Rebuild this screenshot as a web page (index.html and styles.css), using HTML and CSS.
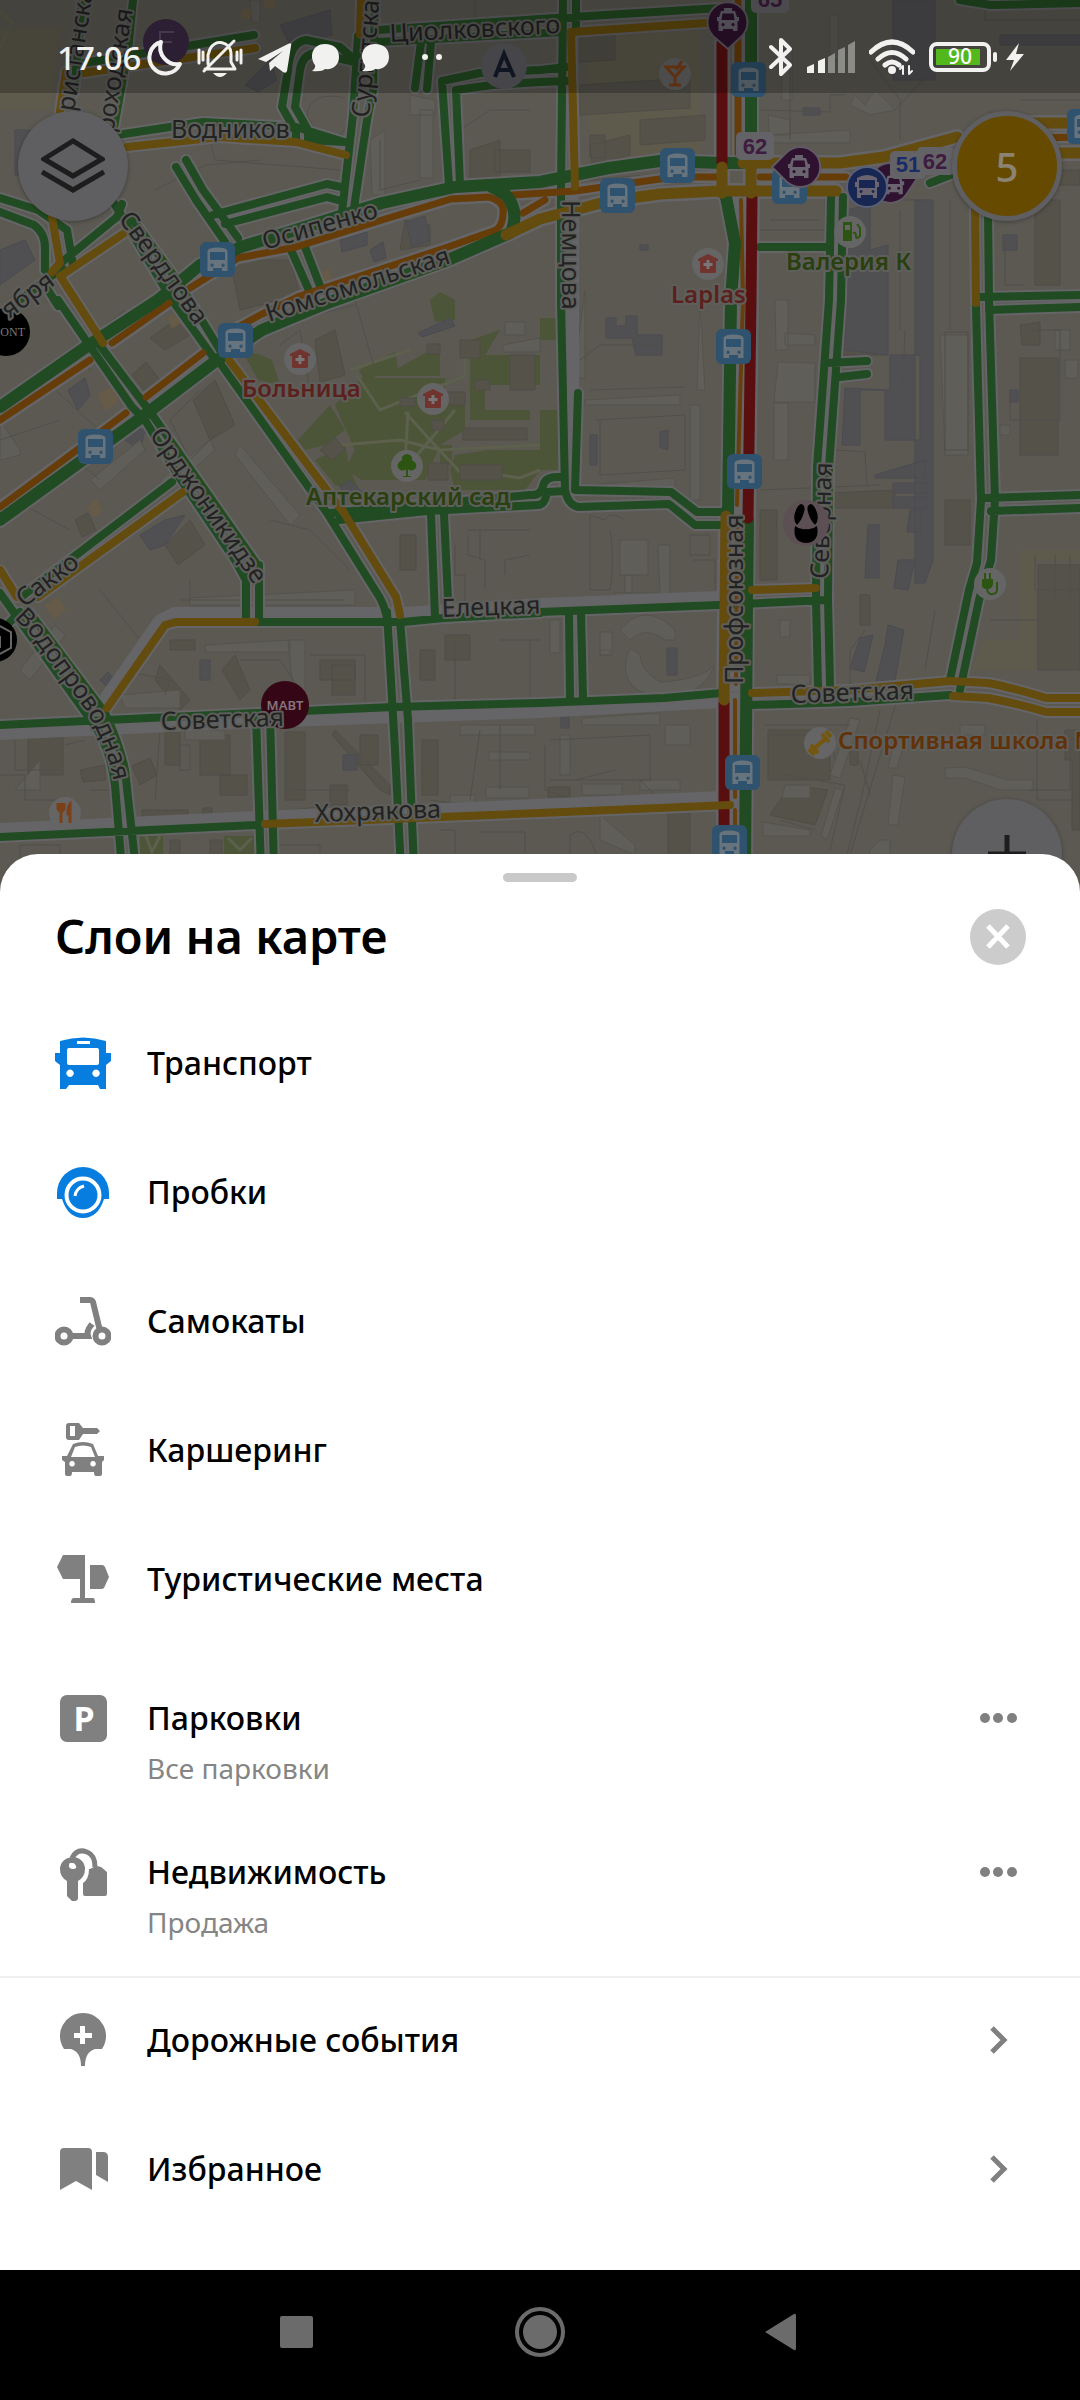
FILE: index.html
```html
<!DOCTYPE html>
<html lang="ru">
<head>
<meta charset="utf-8">
<meta name="viewport" content="width=device-width, initial-scale=1">
<title>Слои на карте</title>
<link rel="stylesheet" href="styles.css">
</head>
<body>
<div class="screen">
<section class="map-area">
<svg class="map" viewBox="0 0 1080 891" preserveAspectRatio="xMidYMin slice" role="img" aria-label="Карта города">
<defs>
<path id="g7" d="M82 0L74 93M133 0L128 50L113 133M84 63L254 35M117 135L203 122L296 127L344 142M358 36L353 115L342 212M375 0L373 90L367 120L354 208M355 60L340 47L306 40Q290 42 288 70L282 107L296 132V142M355 62L315 53Q302 55 300 70L295 107L308 130V140L344 142M378 30L540 19L720 8M378 42L562 32M421 42L415 88M431 42L427 89M567 67L540 70L480 73L442 81L449 185M567 81L540 82L492 85L456 90L460 185M563 0L561 190M576 0V28M561 190V300L565 490M578 393L575 490L671 492L697 512H722M565 490Q568 505 578 507L669 504L695 525H722M560 477Q545 476 543 486T530 495L330 513M565 491L547 492Q545 505 538 505L427 511L339 520M831 197L829 300L817 467L816 600L818 687M843 197L841 300L829 467L828 600L830 684M826 363L867 361M840 377L867 374M760 247H829M540 612L719 605L826 600M988 210L989 300L995 500L991 560L979 600L960 690M976 307L981 500L977 563L969 590L950 680M980 297L1080 295M989 310L1080 307M983 498L1080 495M991 511L1080 508M960 0L991 5L1080 3M750 705L850 702L950 695M0 725L258 713L393 707L540 703L664 698L722 693M0 837L258 825M255 622H403L444 618L540 613M246 573V622M259 565V622M431 514L435 617M444 514L448 599M569 613L570 698M581 613L583 698M256 716L261 870M270 714L274 870M387 612L395 750L401 870M400 620L408 720L414 870M220 363L327 513L375 590Q386 605 388 625M131 217L179 283L220 350M112 200L172 300L213 357M58 300L132 407L145 420L179 477L235 560L246 580M98 343L151 413L256 563Q260 570 259 580M21 597L172 482M30 613L105 713Q120 745 125 770L136 870M0 593L92 722Q110 745 115 785L122 870M0 632L20 612M176 167L196 200L225 242M186 160L203 190L238 238M213 215L327 184L341 187M225 224L327 197L341 201M291 250L312 297M305 247L322 291M0 198L38 210L67 230L73 265M0 212L34 225Q45 233 45 248V270M62 262L117 217L122 204M48 290L58 306M930 183L958 172M0 315L62 268"/>
<path id="g11" d="M0 407L86 347L158 300L200 265L241 247L382 203L455 187L540 182L609 168L660 161L722 163H742M510 233L448 260L327 303L262 330L217 360L138 420L0 520M512 230Q519 210 506 195L492 187M751 0V137M726 197L735 243L731 300L728 515M748 520L747 600L745 870"/>
<path id="y8" d="M66 72L59 118M84 73L255 48M127 147L220 137L296 142L346 155M361 0L360 35M705 23L571 32L575 187M975 210L976 303M752 590L816 588M752 693L850 690L950 681L988 683Q1010 687 1046 698H1080M953 696L988 698Q1020 704 1046 712H1080M265 824L540 813L730 805M107 708L165 625L176 622H255M229 360L344 513L396 597L400 615M62 275L126 232M52 217L60 263L52 272M60 276L103 343M38 597L183 492M0 570L17 597"/>
<path id="y11" d="M506 235L540 219L609 201L660 194L719 191H836M743 163H840L884 157L957 137M1030 123H1080M1040 153H1080M722 167V193M751 163V193M726 516L724 700"/>
<path id="o7" d="M190 288L238 258L296 247L382 220L451 199L489 197Q505 202 503 213Q503 225 496 230L448 247L300 296L262 314L238 327M513 195L575 191L674 177H716M523 213L545 200M738 0V153M760 177H846M1040 138L1080 137M112 343L169 303M0 420L90 360M146 397L203 353M126 413L77 450L0 507"/>
<path id="o4" d="M741 200L743 300L737 505M737 520L736 684M735 700V797M735 810V870"/>
<path id="r11" d="M722 43V163M752 197L751 300L748 518M724 703V855"/>
<symbol id="bus" viewBox="0 0 35 35"><rect class="stop" width="35" height="35" rx="6"/><path class="stop-glyph" fill-rule="evenodd" d="M7.500 9Q8 5.500 17.500 5.500T27.500 9V29H22V26H13V29H7.500ZM10 10V18H25V10ZM12 21.500a1.700 1.700 0 1 0 .1 0M23 21.500a1.700 1.700 0 1 0 .1 0"/></symbol>
<symbol id="cab" viewBox="0 0 26 26"><path class="pin-glyph" fill-rule="evenodd" d="M9 1H17V4H20L22 10H24V14H22.500V24H18V22H8V24H3.500V14H2V10H4L6 4H9ZM7.500 6.500L6.500 13H19.500L18.500 6.500ZM8 16a1.600 1.600 0 1 0 .1 0M18 16a1.600 1.600 0 1 0 .1 0"/></symbol>
<symbol id="med" viewBox="0 0 32 32"><circle class="poi" cx="16" cy="16" r="16"/><path class="med" d="M16 6L26 11V13H24V24Q24 25 22 25H10Q8 25 8 24V13H6V11Z"/><path class="med-cross" d="M16 12V21M11.500 16.500H20.500"/></symbol>
<path id="vodo" d="M14 618L30 634L84 708Q104 738 113 778"/>
</defs>
<rect class="ground" width="1080" height="891"/>
<path class="sand" d="M0 30L60 28L50 110H0ZM585 35L700 30V160L590 168ZM1020 550H1080V560H1035V670H970L985 640H1020Z"/>
<path class="park" d="M359 370L395 352L398 368L440 345V376H375L372 395ZM335 405L362 378H445V395H465V430L440 445L425 480H362L345 470L355 450ZM330 405L345 430L325 445L305 450L298 440ZM440 445H452V465H440ZM315 460L345 445L350 470L360 492L335 485ZM243 352L258 354L272 360L280 385L258 380ZM470 340L500 330L485 355H540V385H485V410H530V420H470ZM455 455L490 450H540V470L525 490H455L450 470ZM140 836H163V860H140ZM224 836H254V855H224ZM540 318H558V340H540ZM540 410H558V470H540ZM430 300L440 292L455 300V320L435 322Z"/>
<path class="paths" d="M356 374L380 410L465 376V345M330 446L400 440L440 450L540 445M408 412L405 465M430 440L405 412M430 440L455 410M430 440L460 472M430 440L400 475M350 370L410 350M540 470L520 478L500 475M146 836L152 852L160 836M228 838L240 850L252 838M0 12L12 22L0 48"/>
<path class="blocks" d="M470 150L500 140V195L470 200ZM495 150H530V172H495ZM405 220L430 225V245L400 250ZM175 320L190 335L165 350L150 338ZM132 375L146 362L160 380L146 393ZM315 340L335 330L345 375L320 382ZM400 398H415V406H400ZM440 392H465V405H440ZM463 428H527V440H463ZM460 465H502V480H460ZM428 463H448V480H428ZM510 355H535V390H510ZM475 380H490V390H475ZM460 340H480V358H460ZM427 344H440V354H427ZM432 420H444V430H432ZM320 450L335 437L345 450L332 460ZM165 545L190 520L205 545L178 565ZM75 520L88 513L96 530L82 537ZM193 400L215 380L235 425L210 440ZM400 535H416V570H400ZM445 635H470V660H445ZM320 660H355V680H320ZM332 665H355V695H332ZM160 665L190 700L180 710L155 680ZM235 655L250 690L240 700L222 670ZM28 737H63V775H28ZM285 732H305V800H285ZM420 650H435V680H420ZM80 770L105 765V780L83 782ZM132 766L150 758L157 775L140 785ZM165 732H180V765H165ZM200 735H230V775H200ZM220 775H247V795H220ZM330 785H347V805H330ZM335 730L390 785V795L380 790L332 735ZM360 735H378V765H360ZM422 740H438V795H422ZM142 810H188V823H142ZM203 808H212V820H203ZM170 840H180V860H170ZM210 840H222V860H210ZM580 30L615 35V60L580 62ZM580 85L690 78V108L580 115ZM640 120L705 115V140L640 145ZM590 145L630 135V155L592 165ZM590 135H605V158H590ZM760 510H777V580H760ZM830 493L895 490V508H830ZM1020 325L1040 322V345H1022ZM1020 358H1058V455H1020ZM945 500H970V545H945ZM1038 565H1080V670H1038ZM1035 170H1080V185H1035ZM1035 200H1060V285H1035ZM838 320H885V355H838ZM860 595H870V625H860ZM548 787H570V797H548ZM668 812H690V855H668ZM768 730H830V780H768ZM850 740H858V765H850ZM790 785L828 790L815 825L770 815ZM1075 730H1080V830H1072V760H1065V730ZM230 260L290 260L300 295L240 310ZM170 640H195V650H170ZM215 350L222 345L230 360L222 365Z"/>
<path class="cool" d="M280 25L330 10L332 35L290 45ZM245 85L270 60L277 80L258 92ZM15 130H30V175H15ZM0 250L25 240L35 260L0 285ZM340 240L367 232V245L342 252ZM406 222L425 216L430 240L412 247ZM370 250L383 242L386 258L374 262ZM68 390L85 378L90 395L78 410ZM125 425L145 430L140 450L122 438ZM140 535L165 520L185 515L165 545L150 550ZM418 333L450 318L455 326L422 337ZM606 318H616V326H626V316H637V335H662V355H636L632 338H606ZM660 432L668 430V450L660 447ZM845 210L870 205V250L888 245V355L845 350ZM845 388L885 390V440H920V355H890V390H860V445H842ZM915 200H933V560L925 583H915ZM875 475L925 460V478H875ZM893 483H926V493H893ZM893 497H926V508H893ZM868 525H879V578H865ZM898 560H915L908 590L894 588ZM910 510H921V532H907ZM893 0H935V80H893ZM1000 35H1080V45H1000ZM1003 235H1017V250H1003ZM860 638L873 635L864 672L850 668ZM888 625L904 630L895 680L875 685L885 645ZM667 648H677V675H667ZM561 715H569V728H561ZM200 660H210V680H200ZM343 755H357V770H343ZM100 680L108 672L115 680L108 688ZM590 435H597V465H590ZM1010 390H1018V402H1010ZM803 108H820V115H803ZM640 245H648V250H640ZM340 487L350 480L365 495H345Z"/>
<path class="light" d="M250 0H260V22H252ZM782 50L792 48V100H782ZM768 115L790 120V135H768L850 130V143H770ZM830 15H838V60H830ZM875 90L895 110L870 115L850 105L855 95L865 105ZM410 95L435 100V115H410ZM420 110H433V178H420ZM370 140L385 130V195H372ZM240 445L300 515L290 525L235 455ZM160 480L210 440L215 450L170 490ZM0 420L20 450V455L0 460ZM90 480L140 440L145 450L100 490ZM585 400L680 395V405H585ZM575 365L585 290V378H575ZM700 300L705 390H697ZM690 405H700V500H690ZM590 485L675 478V488H590ZM778 362L815 363V402H774ZM775 300H788V350H776ZM785 333L815 335V345H785ZM774 403H788V460H774ZM940 335H968V455H945ZM1055 330H1070V350H1055ZM1065 360H1078V378H1065ZM1000 425H1010V435H1000ZM620 540H648V575H620ZM658 545H670V605H615V593H660ZM625 575H632V593H625ZM205 645L290 640V652H205ZM288 640H305V710H295ZM120 695L180 690V708H125ZM190 598L355 590V605H190ZM20 670L55 625L65 635L30 680ZM15 790L40 760V790ZM185 730H225V740H185ZM460 725H535V735H460ZM489 752H530V760H489ZM486 787H529V798H486ZM450 795H475V803H450ZM600 815L635 845V855L600 840ZM582 718L660 713V725H582ZM560 735H570V775H560ZM665 725H690V745H665ZM582 784H622V795H582ZM640 780H680V790H640ZM600 650H610V655H600ZM550 620H560V653H550ZM600 632H612V655H600ZM620 630Q645 600 675 630V640H665Q645 625 630 640ZM630 648Q615 685 650 695H680Q705 690 715 665Q700 680 660 682Q640 670 640 655ZM850 718L860 720L840 778L830 775ZM895 735L905 740L897 768H888ZM893 775L905 777L898 825H888ZM835 788L843 790L827 840L821 836ZM785 785H810V798H782ZM763 822L810 830V836H763ZM945 768L965 767L1008 780H1033V790H1000L965 778H945ZM870 850L880 840H890V870H870ZM960 725H985V735H960ZM780 620H790V637H780ZM777 675H810V684H777ZM503 345L540 338V352H503ZM505 322H525V335H505Z"/>
<path class="lines" d="M345 98Q310 90 307 115L315 130Q330 145 345 130M155 190L205 165L260 160M128 220L140 250L170 300M210 140L215 160L340 170M380 140V190L420 180M460 130L490 110H530M475 0V20H510M590 180L700 170M760 110L830 112V95H845M770 45L790 60V140M870 60L900 100V140M895 110L960 40M985 0V20H1080M1020 100H1080M990 110L1000 150M765 190L825 195V230H760M770 220H820M900 210V330M880 200H920M950 200V330M1005 240V285H1025M1060 210V280M590 390L685 387M595 420L685 415V470L600 475V420M580 360L600 345H660M905 330L902 405M835 450L865 452L867 487M760 490L880 485M945 332H968V450H945ZM1010 400V420H1060V330H1030M625 520Q610 510 605 520L590 515V590H610Q615 560 610 530M690 535H710V555H690ZM693 560H715V590M170 420L200 390L230 420L190 460ZM190 580V600M180 600H345M270 520L310 530L350 570M55 390L110 440M0 440L60 420M15 500L70 530M100 590L140 640M120 670L170 680L165 695M240 660H280L300 690V715M310 655H365V705H320M455 640V700M500 640H540M530 640V700M480 730L470 800M500 790V725M15 740V770H60M65 745L85 740M160 730L155 800M180 745H190V770H180ZM0 775H25V800H65M90 790H125M290 790H350M430 800L500 810M545 745V790L575 800M550 740L650 735V780H550M575 780L615 770M640 780L660 800M765 725H850M770 735H830L835 760M785 775L845 785L830 850M860 760L870 795M880 710L862 795L847 855M1030 790H1070V745M1037 720V800H1075M900 690L850 855M935 610L925 670M850 685V650L865 630M570 870V835Q590 820 600 870M20 860V845H60V870M440 830H455V870M480 832H525V870M270 845H320V860M290 810L340 805M65 450L100 480M80 350L90 370M100 330L125 310M780 820L815 830M990 620H1038M1035 555V590H1080M1055 555V600M1070 555V600M465 610V575H455V545M468 535V555L485 560V590M480 530V560M468 530H530M505 575V560L530 555M280 345L300 330L310 390L330 395M295 320L355 305M355 300L375 370"/>
<path class="warm" d="M162 22L172 20V30L162 33ZM242 10H250V18H242ZM265 0H274V8H265ZM70 450L85 438L92 450L78 462ZM88 508L96 500L102 510L94 517ZM168 318L178 312L182 322L172 328ZM98 395L115 385L118 402L105 410ZM320 275L328 268L332 280L324 285ZM45 605L58 598L65 610L55 618Z"/>
<g class="casing"><use href="#g7" class="w8"/><use href="#g11" class="w12"/><use href="#y8" class="w8"/><use href="#y11" class="w12"/><use href="#o7" class="w8"/><use href="#o4" class="w12"/><use href="#r11" class="w12"/><path class="w8" d="M0 734L258 722L540 712L722 702M0 829L258 817L722 797M102 703L160 620L174 613H403L540 604L719 597M262 615H400M573 200V485"/></g>
<g class="road"><use href="#g7" class="g7"/><use href="#o7" class="o7"/><use href="#o4" class="o4"/><use href="#g11" class="g11"/><use href="#r11" class="r11"/><use href="#y8" class="y8"/><use href="#y11" class="y11"/></g>
<g><circle class="brand-violet" cx="166" cy="42" r="23"/><path class="brand-line" d="M174 32H160V52M160 42H172"/>
<circle class="brand-light" cx="504" cy="66" r="23"/><path class="brand-a" d="M495 77L504 54L514 77M498 70H511"/>
<circle class="black" cx="6" cy="332" r="24"/><text class="brand-serif" x="25" y="336" text-anchor="end">ONT</text>
<circle class="black" cx="-5" cy="640" r="22"/><path class="brand-hex" d="M-4 624L11 632V648L-4 656M0 636V648"/>
<circle class="mavt" cx="285" cy="705" r="24"/><text class="brand-sans" x="285" y="710" text-anchor="middle">МАВТ</text></g>
<g class="street">
<text transform="translate(74 112) rotate(-81)">ристанская</text>
<text transform="translate(111 147) rotate(-81)">ароходская</text>
<text x="171" y="138">Водников</text>
<text transform="translate(369 118) rotate(-85)">Сургутская</text>
<text transform="translate(390 42) rotate(-3)">Циолковского</text>
<text transform="translate(265 250) rotate(-16)">Осипенко</text>
<text transform="translate(269 322) rotate(-18)">Комсомольская</text>
<text transform="translate(118 219) rotate(54)">Свердлова</text>
<text transform="translate(56 284) rotate(-37)" text-anchor="end">ября</text>
<text transform="translate(149 435) rotate(55)">Орджоникидзе</text>
<text transform="translate(24 608) rotate(-37)">Сакко</text>
<text><textPath href="#vodo">Водопроводная</textPath></text>
<text transform="translate(161 730) rotate(-2)">Советская</text>
<text transform="translate(315 822) rotate(-2)">Хохрякова</text>
<text transform="translate(442 617) rotate(-2)">Елецкая</text>
<text transform="translate(562 200) rotate(90)">Немцова</text>
<text transform="translate(743 684) rotate(-90)">Профсоюзная</text>
<text transform="translate(828 579) rotate(-88)">Северная</text>
<text transform="translate(791 703) rotate(-2)">Советская</text>
</g>
<g class="place">
<text class="t-red" x="671" y="303">Laplas</text><text class="t-green" x="786" y="270">Валерия К</text><text class="t-red" x="242" y="397">Больница</text><text class="t-green" x="306" y="505">Аптекарский сад</text><text class="t-orange" x="838" y="749">Спортивная школа №</text>
</g>
<g>
<use href="#med" x="692" y="248" width="32" height="32"/><use href="#med" x="284" y="343" width="32" height="32"/><use href="#med" x="417" y="383" width="32" height="32"/>
<circle class="poi" cx="675" cy="74" r="16"/><path class="ln-orange" d="M666 67H684L675 77ZM675 77V84M669 85H681M676 70L682 61"/>
<circle class="poi" cx="850" cy="232" r="16"/><path class="fl-green" fill-rule="evenodd" d="M843 222H852V241H843ZM845 225V230H850V225Z"/><path class="ln-green" d="M853 233Q856 232 856 236T860 236V228L857 224"/>
<circle class="poi" cx="407" cy="466" r="16"/><path class="fl-green" d="M407 454Q413 455 412 460Q419 464 415 469Q411 472 408 469V476H411V477H403V476H406V469Q403 472 399 469Q395 464 402 460Q401 455 407 454Z"/>
<circle class="poi" cx="990" cy="584" r="16"/><path class="fl-green" d="M982 579H993V583Q993 589 987 589T982 583Z"/><path class="ln-green" d="M985 573V579M990 573V579M987 589Q988 595 993 594T997 588V582"/>
<circle class="poi" cx="820" cy="743" r="16"/><path class="ln-yellow" d="M811 745L818 753M822 734L829 742M815 748L826 738M809 749L814 755M826 731L831 737"/>
<circle class="poi" cx="65" cy="813" r="16"/><path class="ln-orange" d="M58 803V809Q61 813 64 809V803M61 803V823M70 823V804Q68 806 68 814H70"/>
<circle class="rose" cx="806" cy="523" r="23"/><path class="black" d="M801 504Q806 505 804 512Q802 520 797 525Q792 519 796 510Q798 505 801 504ZM811 504Q806 505 808 512Q810 520 815 525Q820 519 816 510Q814 505 811 504ZM795 526Q800 530 806 529Q812 530 817 526Q820 542 806 543Q792 542 795 526Z"/>
</g>
<g><use href="#bus" x="200" y="242" width="35" height="35"/><use href="#bus" x="731" y="62" width="35" height="35"/><use href="#bus" x="660" y="148" width="35" height="35"/><use href="#bus" x="600" y="178" width="35" height="35"/><use href="#bus" x="772" y="169" width="35" height="35"/><use href="#bus" x="1067" y="109" width="35" height="35"/><use href="#bus" x="218" y="323" width="35" height="35"/><use href="#bus" x="78" y="429" width="35" height="35"/><use href="#bus" x="716" y="329" width="35" height="35"/><use href="#bus" x="727" y="454" width="35" height="35"/><use href="#bus" x="725" y="755" width="35" height="35"/><use href="#bus" x="712" y="825" width="35" height="35"/></g>
<g>
<path class="pin" d="M728 49L713 36A20 20 0 1 1 742 36Z"/><use href="#cab" x="715" y="7" width="26" height="26"/>
<path class="pin" d="M772 167L787 152A20 20 0 1 1 787 182Z"/><use href="#cab" x="786" y="154" width="26" height="26"/>
<path class="pin" d="M918 177L908 192A20 20 0 1 1 892 163L900 164Z"/><use href="#cab" x="882" y="172" width="24" height="24"/>
<circle class="pin-blue" cx="867" cy="187" r="20"/><path class="pin-glyph" fill-rule="evenodd" d="M857 178Q867 172 877 178V182H879V187H877V198H873V195H861V198H857V187H855V182H857ZM859 180V188H875V180ZM861 190a1.500 1.500 0 1 0 .1 0M873 190a1.500 1.500 0 1 0 .1 0"/>
<rect class="tag" x="751" y="-16" width="38" height="29" rx="5"/><rect class="tag" x="736" y="132" width="38" height="28" rx="5"/><rect class="tag" x="917" y="147" width="38" height="28" rx="5"/><rect class="tag" x="890" y="151" width="36" height="28" rx="5"/>
<g class="route"><text x="770" y="7">65</text><text x="755" y="154">62</text><text x="935" y="169">62</text><text class="route-blue" x="908" y="172">51</text></g>
</g>
</svg>
<button class="round layers" aria-label="Слои"><svg viewBox="0 0 64 56" width="64" height="56"><path d="M3 21L32 3L61 21L32 38ZM1 34L32 52L63 34"/></svg></button>
<button class="round traffic" aria-label="Пробки: 5 баллов">5</button>
<button class="round plus" aria-label="Приблизить"><svg viewBox="0 0 40 40" width="40" height="40"><path d="M20 1V39M1 20H39"/></svg></button>
<header class="status">
<div class="status-left"><time>17:06</time>
<svg class="slot" viewBox="0 0 50 44"><path class="st" d="M21 7A16 16 0 1 0 40 29A17 17 0 0 1 21 7Z"/></svg>
<svg class="slot wide" viewBox="0 0 60 44"><path class="st3" d="M15 34H45L41 27V18A11 11 0 0 0 20 14L18 20V29M14 36L44 6M9 15V28M13 17V25M51 15V28M47 17V25"/><path class="fw" d="M23 38H37Q30 46 23 38Z"/></svg>
<svg class="slot" viewBox="0 0 50 44"><path class="fw" d="M8 24L38 9Q42 7 41 11L37 36Q36 39 33 37L25 31L20 36L19 28L33 16L16 27Z"/></svg>
<svg class="slot" viewBox="0 0 50 44"><path class="fw" d="M25 9C34 9 39 14 39 22S33 35 25 34Q22 37 12 36Q16 33 15 30C9 22 12 9 25 9Z"/></svg>
<svg class="slot" viewBox="0 0 50 44"><path class="fw" d="M25 9C34 9 39 14 39 22S33 35 25 34Q22 37 12 36Q16 33 15 30C9 22 12 9 25 9Z"/></svg>
<svg class="slot last" viewBox="0 0 64 44"><circle class="fw" cx="25" cy="22" r="3"/><circle class="fw" cx="39" cy="22" r="3"/></svg></div>
<div class="status-right">
<svg viewBox="0 0 24 40" width="24" height="40"><path class="st" d="M2 10L21 28L12 37V3L21 12L2 30"/></svg>
<svg viewBox="0 0 48 40" width="48" height="40"><path class="fw" d="M0 36V30L7 27V36ZM11 36V24L18 21V36Z"/><path class="dimbar" d="M21 36V20L28 16V36ZM31 36V13L38 10V36ZM41 36V8L48 4V36Z"/></svg>
<svg viewBox="0 0 46 40" width="46" height="40"><path class="st5" d="M2 15Q23 -5 44 15M9 22Q23 9 37 22M16 28Q23 22 30 28"/><circle class="fw" cx="23" cy="33" r="4"/><path class="st2" d="M34 37V29L31 32M40 29V37L43 34"/></svg>
<svg viewBox="0 0 96 40" width="96" height="40"><rect class="st" x="2" y="7" width="58" height="26" rx="6"/><rect class="charge" x="7" y="12" width="44" height="16"/><path class="st" d="M66 17V23"/><path class="fw" d="M90 6L77 23H85L81 34L95 17H87Z"/><text class="pct" x="31" y="27" text-anchor="middle">90</text></svg>
</div>
</header>
</section>
<main class="sheet">
<div class="grabber"></div>
<div class="head"><h1>Слои на карте</h1><button class="close" aria-label="Закрыть"><svg viewBox="0 0 56 56" width="56" height="56"><circle cx="28" cy="28" r="28"/><path d="M18 17L38 38M38 17L18 38"/></svg></button></div>
<ul class="list">
<li><button class="row on"><svg class="icon" viewBox="0 0 56 56"><path fill-rule="evenodd" d="M5 6Q28-1 51 6V18H56V26L51 30V54H45L43 50H14L11 54H5V30L0 26V18H5ZM22 6V9H35V6ZM12 15V28Q12 30 14 30H42Q44 30 44 28V15Q44 13 42 13H14Q12 13 12 15ZM15 34.500a3.700 3.700 0 1 0 .1 0M41 34.500a3.700 3.700 0 1 0 .1 0"/></svg>Транспорт</button></li>
<li><button class="row on"><svg class="icon" viewBox="0 0 56 56"><path d="M28 3A26 26 0 0 1 54 29V35H49Q43 54 28 54T7 35H2V29A26 26 0 0 1 28 3Z"/><circle class="ring" cx="28" cy="31" r="16.500"/><path class="ring thin" d="M20 32Q21 24 29 22"/></svg>Пробки</button></li>
<li><button class="row"><svg class="icon" viewBox="0 0 56 56"><path class="ol" d="M25 7H35Q37 7 38 9L45 38M16 43H33C31 37 35 34 37 31"/><circle class="ol" cx="9" cy="43" r="6.500"/><circle class="ol" cx="47" cy="43" r="6.500"/></svg>Самокаты</button></li>
<li><button class="row"><svg class="icon" viewBox="0 0 56 56"><path fill-rule="evenodd" d="M14 1H24L28 6H42L45 9L42 12H28L24 18H14Q11 18 11 15V4Q11 1 14 1ZM15 4V14H20V4ZM18 22Q28 18 38 22L43 34H49V38L47 40V52Q47 54 45 54H41Q39 54 39 50H17Q17 54 15 54H12Q10 54 10 52V40L7 38V34H12ZM20 25L16 35H40L36 25Q28 22 20 25ZM17 39a2.800 2.800 0 1 0 .1 0M38 39a2.800 2.800 0 1 0 .1 0"/></svg>Каршеринг</button></li>
<li><button class="row"><svg class="icon" viewBox="0 0 56 56"><path d="M8 4H30V47H38Q40 47 40 52H16Q16 47 19 47H25V28H8L2 16ZM35 14H47Q49 14 50 16L54 26L49 37Q48 38 46 38H35Z"/></svg>Туристические места</button></li>
<li class="double"><button class="row"><svg class="icon" viewBox="0 0 56 56"><rect x="5" y="2" width="47" height="47" rx="7"/><text class="p" x="29" y="38" text-anchor="middle">P</text></svg><span class="names"><span>Парковки</span><small>Все парковки</small></span></button><button class="more" aria-label="Настроить парковки"><svg viewBox="0 0 56 50" width="56" height="50"><circle cx="15" cy="25" r="5"/><circle cx="28" cy="25" r="5"/><circle cx="42" cy="25" r="5"/></svg></button></li>
<li class="double"><button class="row"><svg class="icon" viewBox="0 0 56 56"><path fill-rule="evenodd" d="M18 10A12 12 0 0 1 30 22Q30 30 23 34V52L21 54H17L12 49V34Q5 30 5 22A13 12 0 0 1 18 10ZM15 16Q14 16 14 19T18 22T21 19T18 16Z"/><path class="ol shackle" d="M17 11Q22 1 32 5Q40 8 40 20"/><path d="M35 22Q41 18 46 20L52 25V47Q52 49 50 49H30Q28 49 28 47V36Q34 32 34 22Z"/></svg><span class="names"><span>Недвижимость</span><small>Продажа</small></span></button><button class="more" aria-label="Настроить недвижимость"><svg viewBox="0 0 56 50" width="56" height="50"><circle cx="15" cy="25" r="5"/><circle cx="28" cy="25" r="5"/><circle cx="42" cy="25" r="5"/></svg></button></li>
</ul>
<ul class="list links">
<li><a class="row" href="#events"><svg class="icon" viewBox="0 0 56 56"><path fill-rule="evenodd" d="M28 1A23 23 0 0 1 47 37H40Q30 40 30 54H26Q26 40 16 37H9A23 23 0 0 1 28 1ZM25 14V21H19V26H25V32H30V26H37V21H30V14Z"/></svg><span class="grow">Дорожные события</span><svg class="chev" viewBox="0 0 56 56"><path d="M22 16L34 28L22 40"/></svg></a></li>
<li><a class="row" href="#favorites"><svg class="icon" viewBox="0 0 56 56"><path d="M5 11Q5 7 9 7H33Q37 7 37 11V49L21 40L5 49ZM41 11H48Q53 11 53 16V41L41 34Z"/></svg><span class="grow">Избранное</span><svg class="chev" viewBox="0 0 56 56"><path d="M22 16L34 28L22 40"/></svg></a></li>
</ul>
</main>
<nav class="nav">
<button aria-label="Недавние"><svg viewBox="0 0 60 60"><rect x="13" y="14" width="33" height="32" rx="2"/></svg></button>
<button aria-label="Домой"><svg viewBox="0 0 60 60"><circle cx="30" cy="30" r="17"/><circle class="outer" cx="30" cy="30" r="23"/></svg></button>
<button aria-label="Назад"><svg viewBox="0 0 60 60"><path d="M12 30L41 12Q43 11 43 14V46Q43 49 41 48Z"/></svg></button>
</nav>
</div>
</body>
</html>
```
FILE: styles.css
```css
* { box-sizing: border-box; }
body { margin: 0; background: #000; font-family: "Noto Sans", "Open Sans", sans-serif; }
button { border: 0; padding: 0; margin: 0; background: none; font: inherit; color: inherit; text-align: left; }
svg { display: block; flex: none; }
.screen { display: flex; flex-direction: column; min-height: 100vh; }

/* map */
.map-area { position: relative; height: 891px; margin-bottom: -37px; overflow: hidden; }
.map { width: 100%; height: 100%; }
.ground { fill: #5b5952; }
.sand { fill: #5e5a4c; }
.park { fill: #4d5538; }
.paths { fill: none; stroke: #5c604c; stroke-width: 3px; }
.blocks { fill: #55524a; stroke: #4f4d46; }
.cool { fill: #505053; stroke: #4a4b52; }
.light { fill: #605e58; stroke: #55534c; }
.lines { fill: none; stroke: #504f4a; }
.warm { fill: #665a48; stroke: #6b5b40; }
.casing, .road { fill: none; stroke-linejoin: round; stroke-linecap: round; }
.casing { stroke: #656568; }
.w8 { stroke-width: 12px; }
.w12 { stroke-width: 16px; }
.g7 { stroke: #214b22; stroke-width: 8px; }
.g11 { stroke: #214b22; stroke-width: 12px; }
.y8 { stroke: #644c0e; stroke-width: 8px; }
.y11 { stroke: #644c0e; stroke-width: 11px; }
.o7 { stroke: #663c08; stroke-width: 7px; }
.o4 { stroke: #663f0c; stroke-width: 4px; }
.r11 { stroke: #590f10; stroke-width: 11px; }
.street { font-size: 25px; fill: #222; stroke: #5e5e5b; stroke-width: 4px; paint-order: stroke; stroke-linejoin: round; }
.place { font-size: 24px; font-weight: 600; stroke: #5e5e5b; stroke-width: 4px; paint-order: stroke; stroke-linejoin: round; }
.t-red { fill: #5c211d; }
.t-green { fill: #2a4010; }
.t-orange { fill: #613208; }
.stop { fill: #2f526e; }
.stop-glyph { fill: #68747d; }
.pin { fill: #2f122f; stroke: #625a63; stroke-width: 2px; }
.pin-blue { fill: #172652; stroke: #586078; stroke-width: 2px; }
.pin-glyph { fill: #6a6470; }
.tag { fill: #636266; }
.route { font: 700 22px "Liberation Sans", sans-serif; fill: #3e1c40; text-anchor: middle; }
.route-blue { fill: #1a2c66; }
.poi { fill: #656565; }
.med { fill: #71332d; }
.med-cross { stroke: #777; stroke-width: 3px; }
.fl-green { fill: #2b5510; }
.ln-green { fill: none; stroke: #2b5510; stroke-width: 2px; }
.ln-orange { fill: none; stroke: #7c4018; stroke-width: 3px; }
.ln-yellow { fill: none; stroke: #74560d; stroke-width: 4px; }
.rose { fill: #5c5054; }
.black { fill: #000; }
.mavt { fill: #350716; }
.brand-violet { fill: #3b2a43; }
.brand-light { fill: #5b5b62; }
.brand-line { fill: none; stroke: #5f4a66; stroke-width: 2px; }
.brand-a { fill: none; stroke: #151c2c; stroke-width: 4px; }
.brand-hex { fill: none; stroke: #666; stroke-width: 2px; }
.brand-serif { font: 12px "Liberation Serif", serif; fill: #777; }
.brand-sans { font-size: 13px; font-weight: 600; fill: #86757c; }

/* map controls */
.round { position: absolute; width: 110px; height: 110px; border-radius: 50%; display: flex; align-items: center; justify-content: center; background: #5f5f62; box-shadow: 0 1px 4px rgba(0, 0, 0, .3); }
.round svg { fill: none; stroke: #1d1d1d; stroke-width: 5px; }
.layers { left: 18px; top: 111px; }
.traffic { right: 18px; top: 111px; border: 5px solid #5f5f62; background: #664a00; color: #8b8373; font-size: 40px; font-weight: 500; }
.plus { right: 18px; top: 799px; }

/* status bar */
.status { position: absolute; inset: 0 0 auto; height: 93px; padding: 22px 55px 0 57px; display: flex; justify-content: space-between; align-items: flex-start; background: rgba(0, 0, 0, .24); color: #f1f1f0; }
.status-left { display: flex; align-items: center; height: 70px; }
.status-left time { width: 83px; font-size: 33px; font-weight: 500; }
.status-right { display: flex; align-items: center; gap: 14px; height: 70px; }
.slot { width: 50px; height: 44px; }
.wide { width: 60px; }
.last { width: 64px; }
.fw { fill: #f1f1f0; }
.st, .st2, .st3, .st5 { fill: none; stroke: #f1f1f0; stroke-width: 4px; stroke-linejoin: round; stroke-linecap: round; }
.st2 { stroke-width: 2px; }
.st3 { stroke-width: 3px; }
.st5 { stroke-width: 5px; }
.dimbar { fill: #8b8b87; }
.charge { fill: #53b81b; }
.pct { font-size: 21px; font-weight: 500; fill: #fff; }

/* bottom sheet */
.sheet { position: relative; flex: 1; background: #fff; border-radius: 38px 38px 0 0; padding-top: 19px; color: #000; }
.grabber { width: 74px; height: 9px; border-radius: 5px; background: #c9c9c9; margin: 0 auto; }
.head { height: 110px; margin: 0 54px 7px 55px; display: flex; align-items: center; justify-content: space-between; }
h1 { margin: 0; font-size: 47px; line-height: 60px; font-weight: 600; }
.head h1 { padding-bottom: 3px; }
.close circle { fill: #ccc; }
.close path { stroke: #fff; stroke-width: 5px; }
.list { list-style: none; margin: 0; padding: 0 0 22px; }
.row { width: 100%; height: 129px; padding: 0 54px 2px 55px; display: flex; align-items: center; gap: 36px; font-size: 32px; line-height: 50px; font-weight: 500; color: #000; text-decoration: none; }
.icon { width: 56px; height: 56px; fill: #808080; }
.on .icon { fill: #067ddf; }
.ring { fill: none; stroke: #fff; stroke-width: 4px; }
.thin { stroke-width: 3px; }
.ol { fill: none; stroke: #808080; stroke-width: 6px; }
.shackle { stroke-width: 5px; }
.p { font-size: 34px; font-weight: 700; fill: #fff; }
.double { display: flex; padding: 49px 54px 5px 55px; align-items: flex-start; }
.double .row { height: 100px; padding: 0; align-items: flex-start; }
.names { display: flex; flex-direction: column; }
.names small { font-size: 28px; line-height: 50px; font-weight: 400; color: #858585; }
.more svg { fill: #808080; }
.links { box-shadow: inset 0 2px #f0f0f0; margin-top: 2px; }
.grow { flex: 1; }
.chev { width: 56px; height: 56px; fill: none; stroke: #808080; stroke-width: 5px; }

/* system navigation */
.nav { height: 130px; display: flex; align-items: center; justify-content: center; gap: 183px; padding-bottom: 6px; background: #000; }
.nav svg { width: 60px; height: 60px; fill: #6b6b6b; }
.nav .outer { fill: none; stroke: #6b6b6b; stroke-width: 4px; }
```
